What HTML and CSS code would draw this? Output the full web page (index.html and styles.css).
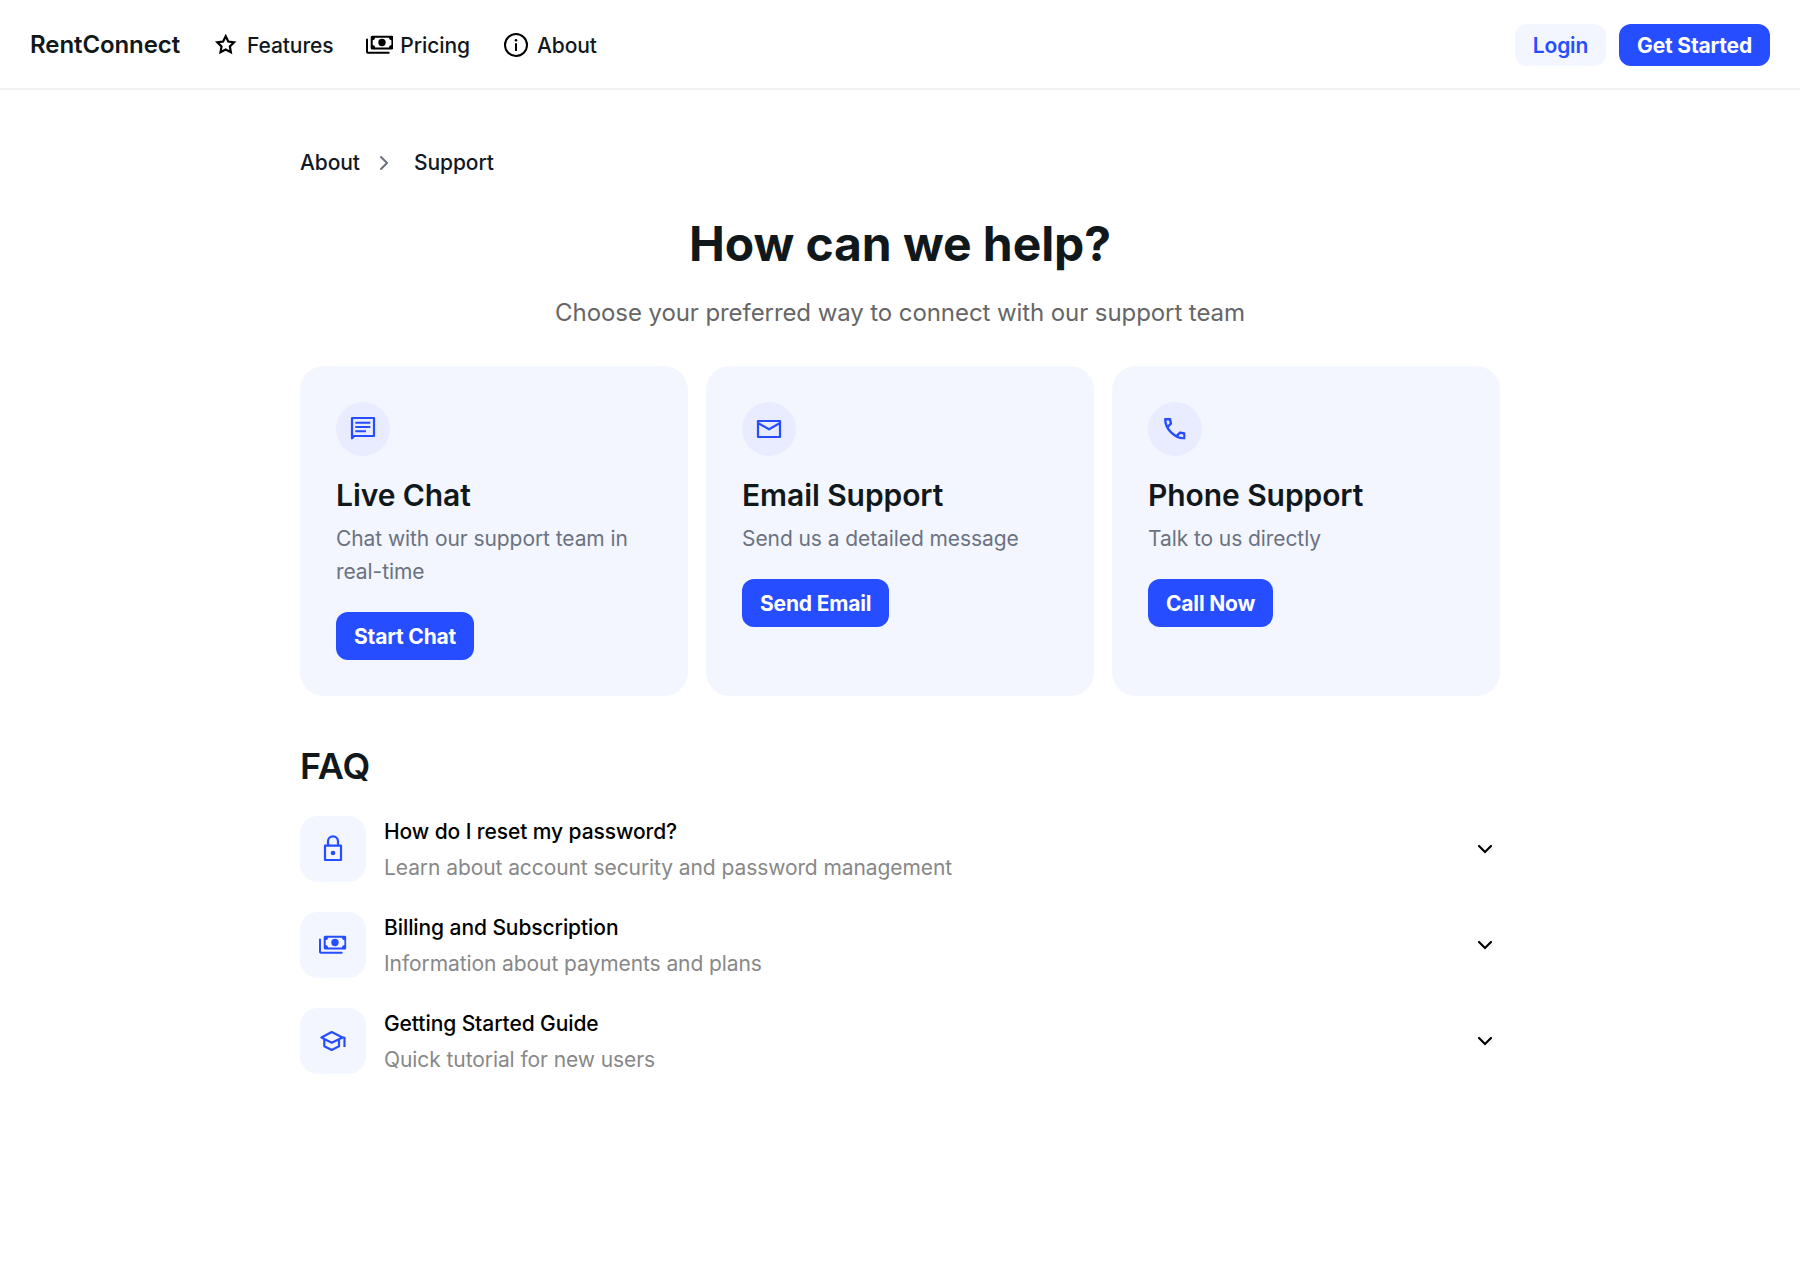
FILE: index.html
```html
<!DOCTYPE html>
<html lang="en">
<head>
<meta charset="utf-8">
<title>RentConnect – Support</title>
<link rel="stylesheet" href="styles.css">
</head>
<body>
<svg class="sprite" width="0" height="0">
  <symbol id="star" viewBox="-13.700 -13.700 27.400 27.400"><path d="M0-8.400L2.590-3.160 8.370-2.320 4.180 1.760 5.170 7.520 0 4.800-5.170 7.520-4.180 1.760-8.370-2.320-2.590-3.160z" fill="none" stroke="currentColor" stroke-width="2.200"/></symbol>
  <symbol id="payments" viewBox="-13.700 -13.700 27.400 27.400"><path fill="currentColor" fill-rule="evenodd" d="M-7.500-9H12.200Q13.700-9 13.700-7.500V3.200Q13.700 4.700 12.200 4.700H-7.500Q-9 4.700-9 3.200V-7.500Q-9-9-7.500-9zM-4.500-7Q-4.700-4.700-7-4.500V.2Q-4.700.4-4.500 2.700H9.200Q9.400.4 11.700.2V-4.500Q9.400-4.700 9.200-7z"/><circle cx="2.300" cy="-2.200" r="3.700" fill="currentColor"/><path d="M-12.700-5.300V7.300Q-12.700 8-12 8H9" fill="none" stroke="currentColor" stroke-width="2" stroke-linecap="round"/></symbol>
  <symbol id="info" viewBox="-15 -15 30 30"><circle r="11" fill="none" stroke="currentColor" stroke-width="2"/><path d="M0-1.700V6" stroke="currentColor" stroke-width="2"/><circle cy="-4.700" r="1.300" fill="currentColor"/></symbol>
  <symbol id="right" viewBox="-12 -12 24 24"><path d="M-3-6L3 0-3 6" fill="none" stroke="currentColor" stroke-width="2" stroke-linecap="round" stroke-linejoin="round"/></symbol>
  <symbol id="down" viewBox="-12 -12 24 24"><path d="M-6-3L0 3 6-3" fill="none" stroke="currentColor" stroke-width="2.200" stroke-linecap="round"/></symbol>
  <symbol id="chat" viewBox="-15 -15 30 30"><path d="M-11 9.300V-11H11V7H-8.700z" fill="none" stroke="currentColor" stroke-width="2.200" stroke-linejoin="round"/><path d="M-11 6V9.500L-8 6.500z" fill="currentColor"/><path d="M-7.700-6.300H7.300M-7.700-2H7.300M-7.700 2.200H3" stroke="currentColor" stroke-width="2.100"/></symbol>
  <symbol id="mail" viewBox="-15 -15 30 30"><path d="M-11-8H11V8H-11zM-11-6L0 .300 11-6" fill="none" stroke="currentColor" stroke-width="2.200" stroke-linejoin="round"/></symbol>
  <symbol id="phone" viewBox="3 3 18 18"><path fill="currentColor" d="M19.950 21q-3.125 0-6.175-1.362t-5.550-3.863t-3.862-5.550T3 4.050q0-.45.300-.75t.750-.3H8.100q.350 0 .625.238t.325.562l.650 3.500q.050.400-.025.675T9.400 8.450L6.975 10.900q.500.925 1.187 1.787t1.513 1.663q.775.775 1.625 1.438T13.100 17l2.350-2.350q.225-.225.588-.337t.712-.063l3.450.700q.350.100.575.363T21 15.900v4.050q0 .450-.3.750t-.75.300M6.025 9l1.650-1.650L7.250 5H5.025q.125 1.025.350 2.025T6.025 9m8.950 8.950q.975.425 1.988.675T19 18.950v-2.200l-2.350-.475z"/></symbol>
  <symbol id="lock" viewBox="-15 -15 30 30"><path d="M-8-3.300H8V11H-8zM-5-3.300V-7.700a5 5 0 0 1 10 0V-3.300" fill="none" stroke="currentColor" stroke-width="2.200" stroke-linejoin="round"/><circle cy="4" r="2.300" fill="currentColor"/></symbol>
  <symbol id="school" viewBox="-15 -15 30 30"><path d="M-11.600-3.600L-1.300-8.900 9.500-3.600-1.300 1.700zM-8.700-2V5.200L-1.300 9 6 5.200V-2M9.500-3.600L11.500-3.200V6" fill="none" stroke="currentColor" stroke-width="2.200" stroke-linejoin="round"/></symbol>
</svg>
<header class="topbar">
  <a class="brand">RentConnect</a>
  <nav class="nav">
    <a class="nav-link"><svg class="icon icon-narrow"><use href="#star"/></svg><span class="label">Features</span></a>
    <a class="nav-link"><svg class="icon icon-narrow"><use href="#payments"/></svg><span class="label">Pricing</span></a>
    <a class="nav-link"><svg class="icon icon-info"><use href="#info"/></svg><span class="label">About</span></a>
  </nav>
  <div class="actions"><button class="btn btn-small btn-light">Login</button><button class="btn btn-small">Get Started</button></div>
</header>
<main class="page">
  <nav class="crumbs"><a>About</a><svg class="crumb-arrow"><use href="#right"/></svg><a>Support</a></nav>
  <h1 class="title">How can we help?</h1>
  <p class="subtitle">Choose your preferred way to connect with our support team</p>
  <section class="cards">
    <article class="card"><div class="badge"><svg class="icon"><use href="#chat"/></svg></div><h2 class="card-title">Live Chat</h2><p class="card-text">Chat with our support team in real-time</p><button class="btn">Start Chat</button></article>
    <article class="card"><div class="badge"><svg class="icon"><use href="#mail"/></svg></div><h2 class="card-title">Email Support</h2><p class="card-text">Send us a detailed message</p><button class="btn">Send Email</button></article>
    <article class="card"><div class="badge"><svg class="icon icon-phone"><use href="#phone"/></svg></div><h2 class="card-title">Phone Support</h2><p class="card-text">Talk to us directly</p><button class="btn">Call Now</button></article>
  </section>
  <h2 class="faq-heading">FAQ</h2>
  <section class="faq">
    <div class="faq-row"><div class="tile"><svg class="icon"><use href="#lock"/></svg></div><div class="faq-copy"><h3 class="question">How do I reset my password?</h3><p class="answer">Learn about account security and password management</p></div><svg class="chevron"><use href="#down"/></svg></div>
    <div class="faq-row"><div class="tile"><svg class="icon icon-narrow"><use href="#payments"/></svg></div><div class="faq-copy"><h3 class="question">Billing and Subscription</h3><p class="answer">Information about payments and plans</p></div><svg class="chevron"><use href="#down"/></svg></div>
    <div class="faq-row"><div class="tile"><svg class="icon"><use href="#school"/></svg></div><div class="faq-copy"><h3 class="question">Getting Started Guide</h3><p class="answer">Quick tutorial for new users</p></div><svg class="chevron"><use href="#down"/></svg></div>
  </section>
</main>
</body>
</html>
```
FILE: styles.css
```css
* { box-sizing: border-box; margin: 0; padding: 0; }
body { font-family: Inter, sans-serif; background: #fff; color: #11181c; font-size: 21px; letter-spacing: -0.08px; }
.sprite { display: none; }
.icon { width: 30px; height: 30px; flex: none; }
.icon-narrow { width: 27.4px; height: 27.4px; }
.icon-info { margin: 0 -1.2px; }
.icon-phone { width: 21.6px; height: 21.6px; }
.topbar { display: flex; align-items: center; height: 90px; padding: 2px 30px 0; border-bottom: 2px solid #f2f2f3; }
.brand { font-size: 24px; font-weight: 600; line-height: 36px; }
.nav { display: flex; gap: 32px; margin-left: 32px; }
.nav-link { display: flex; align-items: center; gap: 7.4px; font-weight: 500; line-height: 30px; }
.nav-link .icon { color: #000; }
.label { padding-top: 2px; }
.actions { display: flex; gap: 13px; margin-left: auto; }
.btn { border: 0; border-radius: 12px; background: #264dff; color: #fff; font: 700 21px/30px Inter, sans-serif; letter-spacing: -0.18px; padding: 10px 18px 8px; }
.btn-small { padding: 7px 18px 5px; }
.btn-light { background: #f3f6ff; color: #264dff; font-weight: 600; }
.page { width: 1200px; margin: 0 auto; padding-top: 57px; }
.crumbs { display: flex; align-items: center; font-weight: 500; line-height: 32px; color: #111827; }
.crumb-arrow { width: 24px; height: 24px; margin: 0 18px 0 12px; color: #6b7280; }
.title { margin-top: 29px; text-align: center; font-size: 48px; line-height: 72px; font-weight: 700; }
.subtitle { margin-top: 15px; text-align: center; font-size: 24px; line-height: 36px; color: #666; }
.cards { display: grid; grid-template-columns: repeat(3, 1fr); gap: 18px; margin-top: 35px; }
.card { background: #f3f6ff; border-radius: 24px; padding: 36px; height: 330px; }
.badge { width: 54px; height: 54px; border-radius: 50%; background: #e9ecff; color: #264dff; display: flex; align-items: center; justify-content: center; }
.card-title { margin-top: 18px; font-size: 30px; line-height: 42px; font-weight: 600; }
.card-text { margin: 6px 0 24px; line-height: 33px; color: #6b7280; }
.faq-heading { margin-top: 46px; font-size: 36px; line-height: 48px; font-weight: 600; }
.faq { display: flex; flex-direction: column; gap: 30px; margin-top: 26px; }
.faq-row { display: flex; align-items: center; gap: 18px; height: 66px; }
.tile { width: 66px; height: 66px; border-radius: 18px; background: #f3f6ff; color: #264dff; display: flex; align-items: center; justify-content: center; }
.faq-copy { flex: 1; padding-top: 2px; }
.question { font-size: 21px; line-height: 30px; font-weight: 500; color: #000; }
.answer { margin-top: 6px; line-height: 30px; color: #888; }
.chevron { width: 24px; height: 24px; margin-right: 3px; color: #000; }
```
